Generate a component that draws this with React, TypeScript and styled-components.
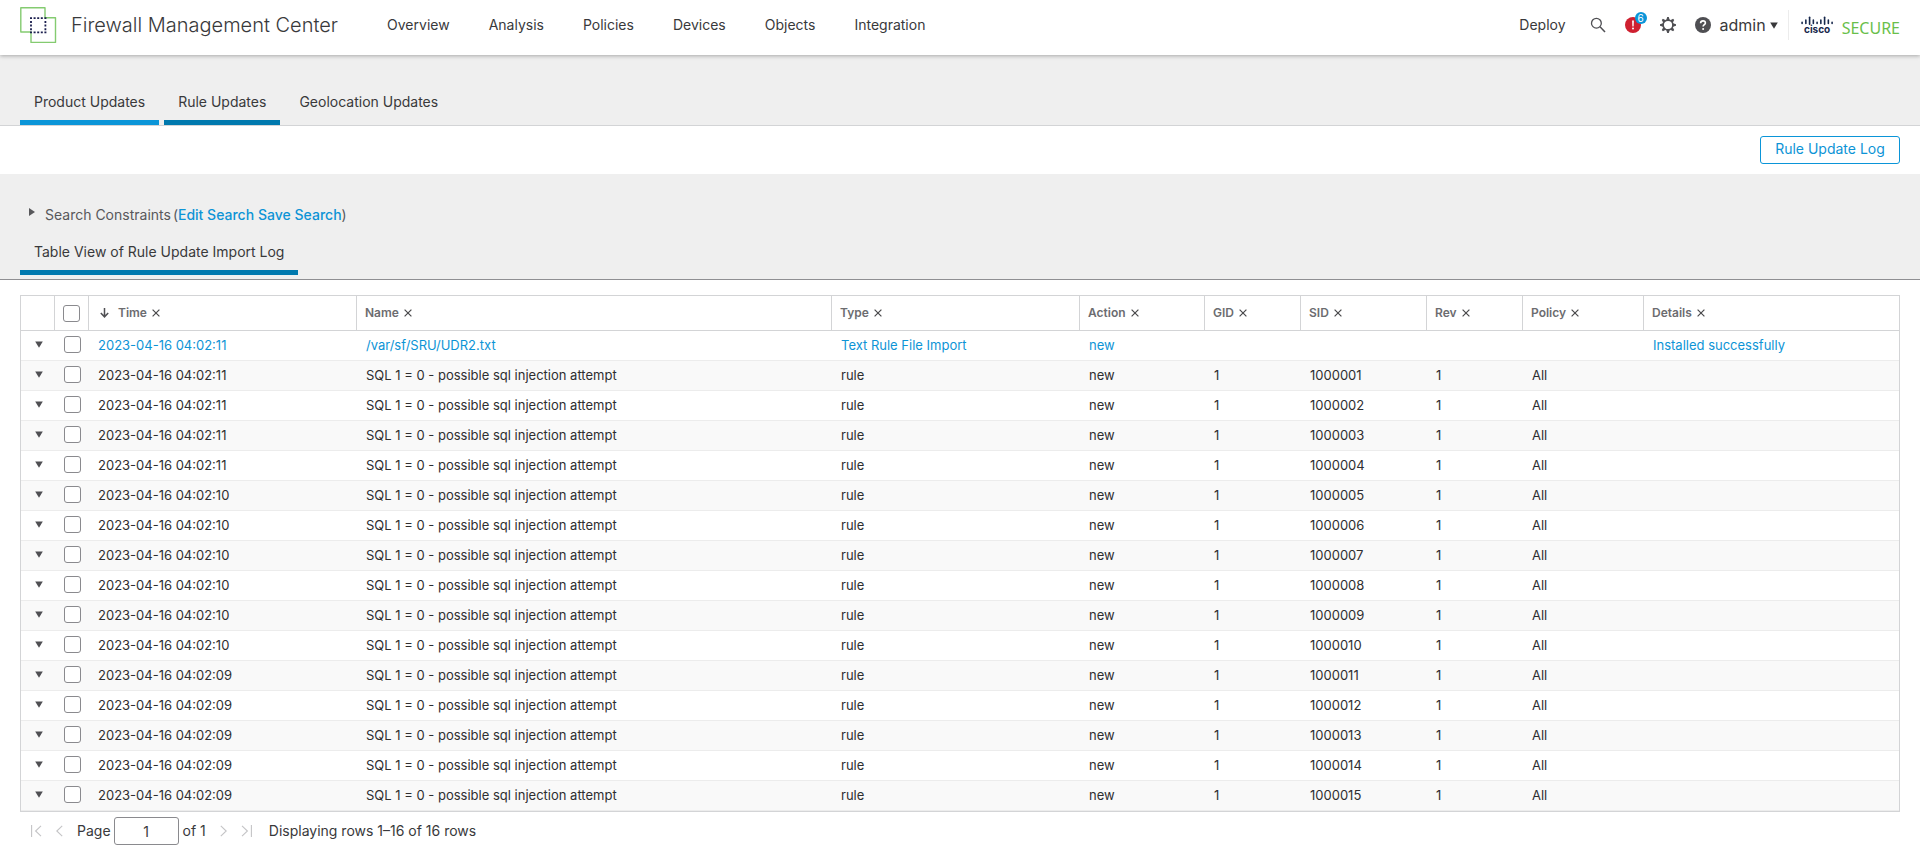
import React from "react";
import styled, { createGlobalStyle } from "styled-components";

const color = {
  link: "#0d94d6",
  accent: "#0b95d8",
  deep: "#0079ae",
  ink: "#39393b",
  icon: "#4f4f53",
  line: "#d3d4d6",
  panel: "#efefef",
};

const GlobalStyle = createGlobalStyle`
  *, *::before, *::after { box-sizing: border-box; }
  body { margin: 0; background: #fff; color: ${color.ink}; }
  body, button, input { font-family: Inter, "Liberation Sans", sans-serif; font-size: 14px; line-height: 20px; }
  button { margin: 0; padding: 0; border: 0; background: none; color: inherit; cursor: pointer; }
  a { color: inherit; text-decoration: none; }
  svg { display: block; flex: none; }
`;

const Header = styled.header`
  position: relative;
  display: flex;
  align-items: center;
  height: 55px;
  padding: 0 20px;
  background: #fff;
  box-shadow: 0 1px 4px rgba(0, 0, 0, 0.3);
`;

const Brand = styled.a`
  display: flex;
  align-items: center;
  gap: 14px;
  height: 50px;
  align-self: flex-start;
`;

const BrandName = styled.span`
  font-size: 20px;
  line-height: 28px;
  font-weight: 300;
`;

const MainNav = styled.nav`
  display: flex;
  align-self: flex-start;
  align-items: center;
  gap: 39px;
  height: 50px;
  margin-left: 49px;
`;

const Tools = styled.div`
  display: flex;
  align-self: flex-start;
  align-items: center;
  height: 50px;
  margin-left: auto;
`;

const ToolButtons = styled.div`
  display: flex;
  align-items: center;
  gap: 19px;
  margin: 0 9px 0 24px;
`;

const IconButton = styled.button`
  position: relative;
  display: block;
  color: ${color.icon};
`;

const Badge = styled.span`
  position: absolute;
  top: -5px;
  right: -6px;
  width: 12px;
  height: 12px;
  border-radius: 50%;
  background: ${color.accent};
  color: #fff;
  font-size: 10px;
  line-height: 12px;
  text-align: center;
`;

const UserButton = styled.button`
  display: flex;
  align-items: center;
  gap: 4px;
  font-size: 16px;
`;

const Vendor = styled.div`
  display: flex;
  align-items: center;
  gap: 8px;
  height: 30px;
  margin-left: 10px;
  padding-left: 12px;
  border-left: 1px solid #ececec;
`;

const VendorWord = styled.span`
  padding-top: 5px;
  color: #6abf4b;
  font-family: "Noto Sans", sans-serif;
  font-size: 16px;
  line-height: 20px;
`;

const TabBand = styled.nav`
  display: flex;
  gap: 5px;
  padding: 35px 20px 0;
  background: ${color.panel};
  border-bottom: 1px solid ${color.line};
`;

const Tab = styled.a<{ $bar?: string }>`
  padding: 2px 14px 8px;
  line-height: 20px;
  border-bottom: 5px solid ${(p) => p.$bar ?? "transparent"};
`;

const ActionBar = styled.div`
  display: flex;
  justify-content: flex-end;
  padding: 10px 20px;
`;

const OutlineButton = styled.button`
  width: 140px;
  height: 28px;
  padding-bottom: 2px;
  border: 1px solid ${color.accent};
  border-radius: 3px;
  background: #fff;
  color: ${color.link};
`;

const SearchBand = styled.section`
  padding: 31px 20px 4px;
  background: ${color.panel};
  border-bottom: 1px solid #8f8f92;
`;

const Constraints = styled.div`
  display: flex;
  align-items: center;
  padding-left: 9px;
  color: #58585b;
`;

const ConstraintsToggle = styled.button`
  display: flex;
  align-items: center;
  gap: 10px;
  margin-right: 2px;
`;

const ConstraintLink = styled.a`
  color: ${color.link};
  font-weight: 500;
`;

const ViewTabs = styled.div`
  display: flex;
  margin-top: 15px;
`;

const TableFrame = styled.div`
  margin: 15px 20px 0;
  border: 1px solid ${color.line};
`;

const Table = styled.table`
  width: 100%;
  table-layout: fixed;
  border-collapse: separate;
  border-spacing: 0;
  font-size: 13px;
  line-height: 18px;
`;

const Col = styled.col<{ $w?: number }>`
  width: ${(p) => (p.$w ? `${p.$w}px` : "auto")};
`;

const Th = styled.th<{ $first?: boolean }>`
  height: 35px;
  padding: 0 8px;
  border-left: ${(p) => (p.$first ? "0" : `1px solid ${color.line}`)};
  border-bottom: 1px solid ${color.line};
  color: #6c6c70;
  font-size: 12px;
  font-weight: 600;
  text-align: left;
  vertical-align: middle;
`;

const HeadCell = styled.div`
  display: flex;
  align-items: center;
  gap: 5px;
`;

const SortButton = styled.button`
  display: flex;
  padding: 0 4px 0 3px;
  color: ${color.icon};
`;

const Row = styled.tr<{ $link?: boolean }>`
  color: ${(p) => (p.$link ? color.link : "#2e2e30")};
  &:nth-child(even) { background: #f9f9f9; }
`;

const Td = styled.td`
  height: 30px;
  padding: 0 8px 2px 10px;
  border-bottom: 1px solid #ececec;
  white-space: nowrap;
  vertical-align: middle;
`;

const Center = styled.div`
  display: flex;
  justify-content: center;
  color: ${color.icon};
`;

const Check = styled.input`
  appearance: none;
  display: block;
  flex: none;
  width: 17px;
  height: 17px;
  margin: 0;
  border: 1px solid #8a8a8e;
  border-radius: 3px;
  background: #fff;
  &:checked { background: ${color.accent}; }
`;

const Pager = styled.footer`
  display: flex;
  align-items: center;
  gap: 4px;
  padding: 5px 20px 8px 31px;
`;

const PageButton = styled.button`
  display: block;
  margin-right: 10px;
  color: #c4c4c6;
`;

const PageLabel = styled.label`
  display: flex;
  align-items: center;
  gap: 3px;
`;

const PageInput = styled.input`
  width: 65px;
  height: 28px;
  padding: 0;
  border: 1px solid #8a8a8e;
  border-radius: 3px;
  background: #fff;
  color: inherit;
  text-align: center;
`;

const PageTotal = styled.span`
  margin-right: 10px;
`;

const Summary = styled.span`
  margin-left: 3px;
`;

const ProductLogo = () => (
  <svg width="37" height="37" viewBox="0 0 37 37" fill="none" aria-hidden="true">
    <path d="M1.2 .8H25v10h10.5v24.6H11V25H.8V.8z" stroke="#84cb70" strokeWidth="1.4" strokeLinejoin="round" />
    <path d="M10 11.2H26.4M10 25.4H26.4" stroke="#1b1f4e" strokeWidth="1.8" strokeDasharray="2 1.6" />
    <path d="M11 14v10.4M25.4 14v10.4" stroke="#1b1f4e" strokeWidth="1.8" strokeDasharray="2 1.6" />
  </svg>
);

const SearchIcon = () => (
  <svg width="16" height="16" viewBox="0 0 16 16" fill="none" stroke="currentColor" aria-hidden="true">
    <circle cx="6.4" cy="6.2" r="4.9" strokeWidth="1.3" />
    <path d="M10 9.8L15 15" strokeWidth="1.5" />
  </svg>
);

const AlertIcon = () => (
  <svg width="16" height="16" viewBox="0 0 16 16" aria-hidden="true">
    <circle cx="8" cy="8" r="8" fill="#cf2030" />
    <path d="M7.1 3.6h1.8L8.6 9.4H7.4z" fill="#fff" />
    <circle cx="8" cy="11.6" r="1" fill="#fff" />
  </svg>
);

const GearIcon = () => (
  <svg width="16" height="16" viewBox="0 0 16 16" aria-hidden="true">
    <circle cx="8" cy="8" r="4.9" fill="none" stroke="currentColor" strokeWidth="1.6" />
    {[0, 45, 90, 135, 180, 225, 270, 315].map((a) => (
      <path key={a} d="M6.3 3L7.2 0h1.6l.9 3z" fill="currentColor" transform={`rotate(${a} 8 8)`} />
    ))}
  </svg>
);

const HelpIcon = () => (
  <svg width="16" height="16" viewBox="0 0 16 16" fill="none" aria-hidden="true">
    <circle cx="8" cy="8" r="8" fill="currentColor" />
    <path d="M5.6 6.2c0-1.4 1-2.3 2.4-2.3s2.4.8 2.4 2.1c0 1.7-2.3 1.7-2.3 3.6" stroke="#fff" strokeWidth="1.6" />
    <circle cx="8.1" cy="11.9" r="1" fill="#fff" />
  </svg>
);

const CaretDown = () => (
  <svg width="8" height="7" viewBox="0 0 8 7" aria-hidden="true">
    <path d="M.2 .4h7.6L4 6.8z" fill="currentColor" />
  </svg>
);

const CaretRight = () => (
  <svg width="6" height="14" viewBox="0 0 6 14" aria-hidden="true">
    <path d="M0 0v8l6-4z" fill="currentColor" />
  </svg>
);

const SortArrow = () => (
  <svg width="9" height="10" viewBox="0 0 9 10" fill="none" stroke="currentColor" strokeWidth="1.5" aria-hidden="true">
    <path d="M4.5 0v8.6M.8 5l3.7 3.8L8.2 5" />
  </svg>
);

const CrossIcon = () => (
  <svg width="8" height="8" viewBox="0 0 8 8" fill="none" stroke="#4a4a4c" strokeWidth="1.2" aria-hidden="true">
    <path d="M.6 .6l6.8 6.8M7.4 .6L.6 7.4" />
  </svg>
);

const CiscoLogo = () => (
  <svg width="33" height="22" viewBox="0 0 33 22" fill="#17284c" aria-label="Cisco">
    {[2.6, 5, 8.6, 5, 2.6, 5, 8.6, 5, 2.6].map((h, i) => (
      <rect key={i} x={0.3 + i * 3.75} y={(h === 8.6 ? 11 : 10.2) - h} width="1.6" height={h} rx=".8" />
    ))}
    <text x="3" y="19" fontFamily="Inter, sans-serif" fontSize="10" fontWeight="700">cisco</text>
  </svg>
);

const arrows = {
  first: { w: 11, d: "M.6 0v12M10 .8L4.6 6l5.4 5.2" },
  previous: { w: 7, d: "M6.2 .8L.8 6l5.4 5.2" },
  next: { w: 7, d: "M.8 .8L6.2 6 .8 11.2" },
  last: { w: 11, d: "M10.4 0v12M1 .8L6.4 6 1 11.2" },
};

const PageArrow = ({ kind }: { kind: keyof typeof arrows }) => (
  <PageButton type="button" aria-label={`${kind} page`}>
    <svg width={arrows[kind].w} height="12" viewBox={`0 0 ${arrows[kind].w} 12`} fill="none" stroke="currentColor" strokeWidth="1.1" aria-hidden="true">
      <path d={arrows[kind].d} />
    </svg>
  </PageButton>
);

const menu = ["Overview", "Analysis", "Policies", "Devices", "Objects", "Integration"];

const tabs = [
  { label: "Product Updates", bar: color.accent },
  { label: "Rule Updates", bar: color.deep },
  { label: "Geolocation Updates" },
];

const columns: { label: string; width?: number }[] = [
  { label: "Time", width: 268 },
  { label: "Name" },
  { label: "Type", width: 248 },
  { label: "Action", width: 125 },
  { label: "GID", width: 96 },
  { label: "SID", width: 126 },
  { label: "Rev", width: 96 },
  { label: "Policy", width: 121 },
  { label: "Details", width: 256 },
];

const seconds = ["11", "11", "11", "11", "10", "10", "10", "10", "10", "10", "09", "09", "09", "09", "09"];

const rows = [
  ["2023-04-16 04:02:11", "/var/sf/SRU/UDR2.txt", "Text Rule File Import", "new", "", "", "", "", "Installed successfully"],
  ...seconds.map((s, i) => [
    `2023-04-16 04:02:${s}`,
    "SQL 1 = 0 - possible sql injection attempt",
    "rule",
    "new",
    "1",
    String(1000001 + i),
    "1",
    "All",
    "",
  ]),
];

export default function App() {
  return (
    <>
      <GlobalStyle />
      <Header>
        <Brand href="#">
          <ProductLogo />
          <BrandName>Firewall Management Center</BrandName>
        </Brand>
        <MainNav>
          {menu.map((m) => (
            <a key={m} href="#">{m}</a>
          ))}
        </MainNav>
        <Tools>
          <a href="#">Deploy</a>
          <ToolButtons>
            <IconButton type="button" aria-label="Search"><SearchIcon /></IconButton>
            <IconButton type="button" aria-label="Notifications">
              <AlertIcon />
              <Badge>6</Badge>
            </IconButton>
            <IconButton type="button" aria-label="Settings"><GearIcon /></IconButton>
            <IconButton type="button" aria-label="Help"><HelpIcon /></IconButton>
          </ToolButtons>
          <UserButton type="button">admin <CaretDown /></UserButton>
          <Vendor>
            <CiscoLogo />
            <VendorWord>SECURE</VendorWord>
          </Vendor>
        </Tools>
      </Header>

      <TabBand>
        {tabs.map((t) => (
          <Tab key={t.label} href="#" $bar={t.bar}>{t.label}</Tab>
        ))}
      </TabBand>

      <ActionBar>
        <OutlineButton type="button">Rule Update Log</OutlineButton>
      </ActionBar>

      <SearchBand>
        <Constraints>
          <ConstraintsToggle type="button">
            <CaretRight /> Search Constraints
          </ConstraintsToggle>
          <span>
            (<ConstraintLink href="#">Edit Search</ConstraintLink>{" "}
            <ConstraintLink href="#">Save Search</ConstraintLink>)
          </span>
        </Constraints>
        <ViewTabs>
          <Tab href="#" $bar={color.deep}>Table View of Rule Update Import Log</Tab>
        </ViewTabs>
      </SearchBand>

      <TableFrame>
        <Table>
          <colgroup>
            <Col $w={33} />
            <Col $w={34} />
            {columns.map((c) => <Col key={c.label} $w={c.width} />)}
          </colgroup>
          <thead>
            <tr>
              <Th $first />
              <Th><Center><Check type="checkbox" aria-label="Select all rows" /></Center></Th>
              {columns.map((c, i) => (
                <Th key={c.label}>
                  <HeadCell>
                    {i === 0 && <SortButton type="button" aria-label="Sort by time"><SortArrow /></SortButton>}
                    {c.label}
                    <IconButton type="button" aria-label={`Hide ${c.label}`}><CrossIcon /></IconButton>
                  </HeadCell>
                </Th>
              ))}
            </tr>
          </thead>
          <tbody>
            {rows.map((cells, r) => (
              <Row key={r} $link={r === 0}>
                <Td><Center><IconButton type="button" aria-label={`Expand row ${r + 1}`}><CaretDown /></IconButton></Center></Td>
                <Td><Center><Check type="checkbox" aria-label={`Select row ${r + 1}`} /></Center></Td>
                {cells.map((c, i) => (
                  <Td key={i}>{r === 0 && c ? <a href="#">{c}</a> : c}</Td>
                ))}
              </Row>
            ))}
          </tbody>
        </Table>
      </TableFrame>

      <Pager>
        <PageArrow kind="first" />
        <PageArrow kind="previous" />
        <PageLabel>Page <PageInput type="text" defaultValue="1" /></PageLabel>
        <PageTotal>of 1</PageTotal>
        <PageArrow kind="next" />
        <PageArrow kind="last" />
        <Summary>Displaying rows 1–16 of 16 rows</Summary>
      </Pager>
    </>
  );
}
